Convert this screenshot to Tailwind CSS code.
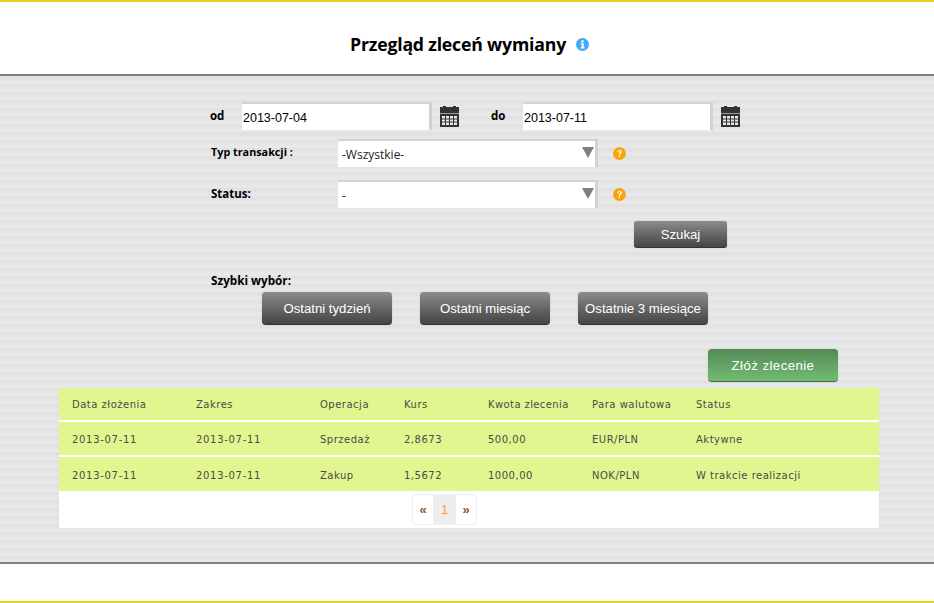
<!DOCTYPE html>
<html lang="pl">
<head>
    <meta charset="UTF-8">
    <title>Przegląd zleceń wymiany</title>
    <script src="https://cdn.jsdelivr.net/npm/@tailwindcss/browser@4"></script>
</head>
<body class="bg-white font-['Liberation_Sans',sans-serif]">
    <div class="w-[934px] h-[603px] overflow-hidden flex flex-col">
        <!-- Header -->
        <header class="h-[76px] shrink-0 border-t-2 border-b-2 border-t-[#e8d41f] border-b-[#808080] flex items-center justify-center pt-[12px] pl-[5px]">
            <h1 class="font-['Open_Sans',sans-serif] font-bold text-[17.7px] text-black tracking-[-0.2px]">Przegląd zleceń wymiany</h1>
            <svg class="ml-[10px]" width="13" height="13" viewBox="0 0 13 13"><circle cx="6.5" cy="6.5" r="6.5" fill="#3fa9f5"/><rect x="5.3" y="2.3" width="2.4" height="2" fill="#fff"/><path d="M4.6 5.3h3.1v4h1v1.2H4.6V9.300h1.100V6.500H4.600z" fill="#fff"/></svg>
        </header>

        <!-- Main area -->
        <main class="h-[488px] shrink-0 border-b-2 border-b-[#808080] pt-[26px] bg-[repeating-linear-gradient(180deg,#e2e2e2_0px,#e2e2e2_3px,#e8e8e8_5px,#e8e8e8_8px)]">
            <!-- Dates -->
            <div class="flex items-center h-[28px] pl-[210px]">
                <label class="w-[32px] font-['Open_Sans',sans-serif] font-bold text-[11.5px] text-black -mt-[1px]">od</label>
                <div class="w-[190px] h-[28px] bg-white border-t-[2px] border-r-[3px] border-[#d2d2d2] text-[12.5px] leading-[28px] pl-[1px] text-black">2013-07-04</div>
                <svg class="ml-[8px] mt-[1px]" width="19" height="21" viewBox="0 0 19 21"><path d="M0 1h3V0h3v1h7V0h3v1h3v6H0z" fill="#333"/><path d="M0 7h19v1H0z" fill="#999"/><path d="M0 8h19v13H0z" fill="#333"/><path d="M2 10h15v9H2z" fill="#e8e8e8"/><path d="M5.500 10v9M9.500 10v9M13.500 10v9M2 13h15M2 16h15" stroke="#333" stroke-width="1"/></svg>
                <label class="ml-[32px] w-[32px] font-['Open_Sans',sans-serif] font-bold text-[11.5px] text-black -mt-[1px]">do</label>
                <div class="w-[190px] h-[28px] bg-white border-t-[2px] border-r-[3px] border-[#d2d2d2] text-[12.5px] leading-[28px] pl-[1px] text-black">2013-07-11</div>
                <svg class="ml-[8px] mt-[1px]" width="19" height="21" viewBox="0 0 19 21"><path d="M0 1h3V0h3v1h7V0h3v1h3v6H0z" fill="#333"/><path d="M0 7h19v1H0z" fill="#999"/><path d="M0 8h19v13H0z" fill="#333"/><path d="M2 10h15v9H2z" fill="#e8e8e8"/><path d="M5.500 10v9M9.500 10v9M13.500 10v9M2 13h15M2 16h15" stroke="#333" stroke-width="1"/></svg>
            </div>

            <!-- Selects -->
            <div class="flex items-center h-[28px] mt-[9px] pl-[211px]">
                <label class="w-[127px] font-['Open_Sans',sans-serif] font-bold text-[10.8px] text-black -mt-[1px]">Typ transakcji :</label>
                <div class="relative w-[260px] h-[28px] bg-white border-t-[2px] border-r-[3px] border-[#d2d2d2] text-[12px] leading-[28px] pl-[4px] font-['Open_Sans',sans-serif] text-[#222]">-Wszystkie-
                    <svg class="absolute right-[1px] top-[6px]" width="12" height="11" viewBox="0 0 12 11"><path d="M0 0h12L6 11z" fill="#808080"/></svg>
                </div>
                <svg class="ml-[15px]" width="13" height="13" viewBox="0 0 13 13"><circle cx="6.500" cy="6.500" r="6.500" fill="#f9a30f"/><path d="M4.300 5.200c0-3 4.500-3 4.500-.3 0 1.700-1.800 1.500-1.800 2.800H5.800c0-2 1.700-1.900 1.700-2.900 0-1-1.900-1-1.900.4z" fill="#fff"/><rect x="5.800" y="8.500" width="1.300" height="1.500" fill="#fff"/></svg>
            </div>
            <div class="flex items-center h-[28px] mt-[13px] pl-[211px]">
                <label class="w-[127px] font-['Open_Sans',sans-serif] font-bold text-[11.5px] text-black -mt-[1px]">Status:</label>
                <div class="relative w-[260px] h-[28px] bg-white border-t-[2px] border-r-[3px] border-[#d2d2d2] text-[12px] leading-[28px] pl-[4px] font-['Open_Sans',sans-serif] text-[#222]">-
                    <svg class="absolute right-[1px] top-[6px]" width="12" height="11" viewBox="0 0 12 11"><path d="M0 0h12L6 11z" fill="#808080"/></svg>
                </div>
                <svg class="ml-[15px]" width="13" height="13" viewBox="0 0 13 13"><circle cx="6.500" cy="6.500" r="6.500" fill="#f9a30f"/><path d="M4.300 5.200c0-3 4.500-3 4.500-.3 0 1.700-1.800 1.500-1.800 2.800H5.800c0-2 1.700-1.900 1.700-2.900 0-1-1.900-1-1.900.4z" fill="#fff"/><rect x="5.800" y="8.500" width="1.300" height="1.500" fill="#fff"/></svg>
            </div>

            <!-- Search -->
            <div class="flex mt-[13px] pl-[634px]">
                <button class="w-[93px] h-[27px] pt-[2px] rounded-[3px] border-b border-[#333] bg-gradient-to-b from-[#8c8c8c] to-[#454545] text-white text-[13.2px] shadow-[0_0_1px_#999]">Szukaj</button>
            </div>

            <!-- Quick select -->
            <div class="pl-[211px] mt-[24px] h-[17px] font-['Open_Sans',sans-serif] font-bold text-[11.7px] leading-[17px] text-black">Szybki wybór:</div>
            <div class="flex gap-[28px] pl-[262px] mt-[3px]">
                <button class="w-[130px] h-[33px] pt-[2px] rounded-[4px] border-b border-[#333] bg-gradient-to-b from-[#8c8c8c] to-[#454545] text-white text-[13.2px] shadow-[0_0_1px_#999]">Ostatni tydzień</button>
                <button class="w-[130px] h-[33px] pt-[2px] rounded-[4px] border-b border-[#333] bg-gradient-to-b from-[#8c8c8c] to-[#454545] text-white text-[13.2px] shadow-[0_0_1px_#999]">Ostatni miesiąc</button>
                <button class="w-[130px] h-[33px] pt-[2px] rounded-[4px] border-b border-[#333] bg-gradient-to-b from-[#8c8c8c] to-[#454545] text-white text-[13.2px] shadow-[0_0_1px_#999]">Ostatnie 3 miesiące</button>
            </div>

            <!-- New order -->
            <div class="flex pl-[708px] mt-[24px]">
                <button class="w-[130px] h-[33px] pt-[2px] rounded-[4px] border-b border-[#3f6f42] bg-gradient-to-b from-[#558a58] to-[#72bc72] text-white text-[13.2px] tracking-[0.45px] shadow-[0_0_1px_#999]">Złóż zlecenie</button>
            </div>

            <!-- Orders table -->
            <div class="w-[820px] ml-[59px] mt-[6px] h-[140px] bg-white font-['DejaVu_Sans',sans-serif] text-[10px] tracking-[0.5px] text-[#4a4a4a]">
                <div class="flex items-center h-[32px] bg-[#e1f68f] mb-[2px]">
                    <span class="w-[124px] pl-[13px] box-content">Data złożenia</span><span class="w-[124px]">Zakres</span><span class="w-[84px]">Operacja</span><span class="w-[84px]">Kurs</span><span class="w-[104px] tracking-[0.4px]">Kwota zlecenia</span><span class="w-[104px]">Para walutowa</span><span>Status</span>
                </div>
                <div class="flex items-center h-[33px] bg-[#e1f68f] mb-[2px] pt-[2px]">
                    <span class="w-[124px] pl-[13px] box-content tracking-[0.7px]">2013-07-11</span><span class="w-[124px] tracking-[0.7px]">2013-07-11</span><span class="w-[84px]">Sprzedaż</span><span class="w-[84px]">2,8673</span><span class="w-[104px]">500,00</span><span class="w-[104px]">EUR/PLN</span><span>Aktywne</span>
                </div>
                <div class="flex items-center h-[34px] bg-[#e1f68f] pt-[2px]">
                    <span class="w-[124px] pl-[13px] box-content tracking-[0.7px]">2013-07-11</span><span class="w-[124px] tracking-[0.7px]">2013-07-11</span><span class="w-[84px]">Zakup</span><span class="w-[84px]">1,5672</span><span class="w-[104px]">1000,00</span><span class="w-[104px]">NOK/PLN</span><span>W trakcie realizacji</span>
                </div>
                <!-- Pagination -->
                <div class="flex justify-center pt-[3px] pr-[49px]">
                    <div class="flex h-[31px] border border-[#eeeeee] rounded-[4px] text-[13px] font-['Liberation_Sans',sans-serif] leading-[29px] text-center tracking-normal">
                        <span class="w-[20px] text-[#8a5a2a] font-bold">«</span>
                        <span class="w-[23px] bg-[#eeeeee] text-[#f9a30f]">1</span>
                        <span class="w-[20px] text-[#8a5a2a] font-bold">»</span>
                    </div>
                </div>
            </div>
        </main>

        <!-- Footer -->
        <footer class="flex-1 border-b-2 border-b-[#e8d41f] bg-white"></footer>
    </div>
</body>
</html>
